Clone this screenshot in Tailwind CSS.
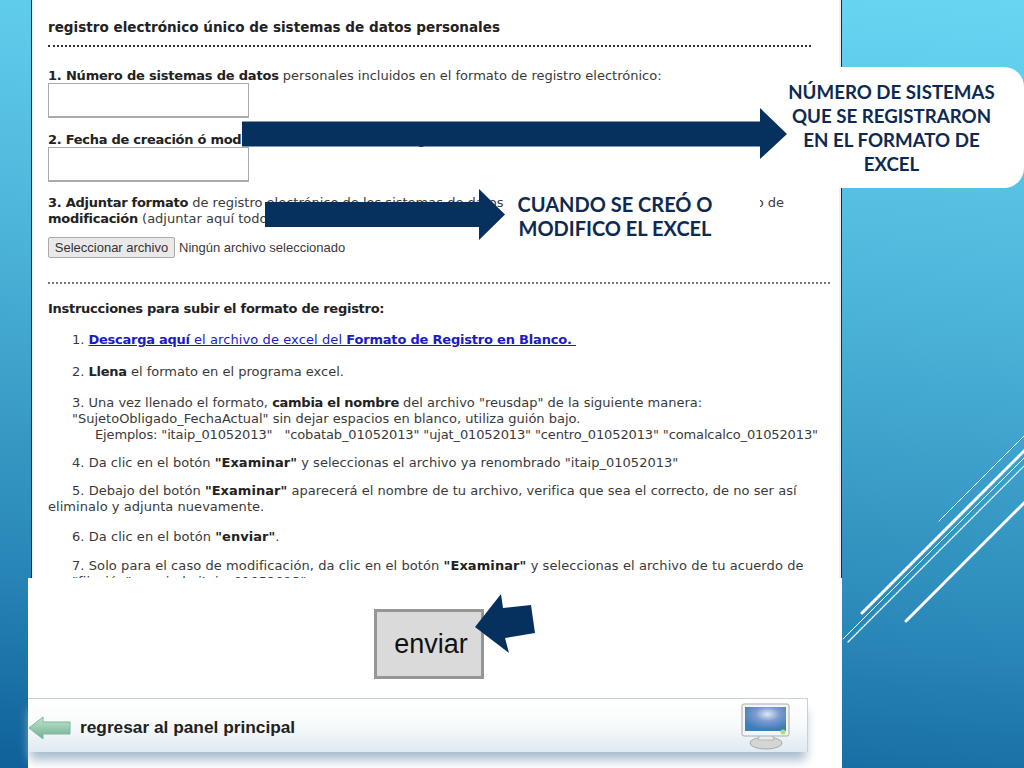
<!DOCTYPE html>
<html lang="es">
<head>
    <meta charset="UTF-8">
    <title>Registro electrónico</title>
    <script src="https://cdn.jsdelivr.net/npm/@tailwindcss/browser@4"></script>
</head>
<body class="bg-white">
<div class="relative w-[1024px] h-[768px] overflow-hidden bg-[linear-gradient(185deg,#68d6f3_0%,#4cb3d8_38%,#2a88b8_75%,#0e6199_100%)]">

    <!-- lineas decorativas -->
    <svg class="absolute inset-0" width="1024" height="768" fill="none" stroke="#fff" stroke-linecap="round">
        <path d="M939 521L1030 430" stroke-width="1"/>
        <path d="M862 613L1030 445" stroke-width="3"/>
        <path d="M843 639L1030 452" stroke-width="1"/>
        <path d="M848 642L1030 460" stroke-width="1.2"/>
        <path d="M906 621L1030 497" stroke-width="3"/>
    </svg>

    <!-- captura del formulario -->
    <div class="relative ml-[31px] w-[811px] h-[578px] overflow-hidden bg-white border-x border-x-[#0f2c52] shadow-[inset_2px_0_0_#f1f1f1,inset_-2px_0_0_#f1f1f1] pl-4 font-['DejaVu_Sans',sans-serif] text-[13px] leading-4 text-[#3a3a3a]">
        <h1 class="pt-[19px] text-[13.55px] font-bold text-[#222]">registro electrónico único de sistemas de datos personales</h1>
        <div class="mt-[10px] w-[763px] border-t-2 border-dotted border-[#333]"></div>

        <p class="mt-[21px]"><b class="text-[#222] tracking-[-0.2px]">1. Número de sistemas de datos</b> personales incluidos en el formato de registro electrónico:</p>
        <div class="mt-[-1px] w-[201px] h-[35px] border border-[#aaa] border-b-2 bg-white"></div>

        <p class="mt-[14px]"><b class="text-[#222] tracking-[-0.27px]">2. Fecha de creación ó modificación</b> del formato de registro electrónico en el sistema:</p>
        <div class="mt-[-1px] w-[201px] h-[35px] border border-[#aaa] border-b-2 bg-white"></div>

        <p class="mt-[13px] whitespace-nowrap"><b class="text-[#222] tracking-[-0.27px]">3. Adjuntar formato</b> de registro electrónico de los sistemas de datos personales, en el caso de su creación o de<br><b class="text-[#222] tracking-[-0.27px]">modificación</b> (adjuntar aquí todos los sistemas)</p>
        <div class="mt-[10px] flex items-center gap-1 font-['Liberation_Sans',sans-serif] text-[13px]">
            <button class="w-[127px] h-[21px] rounded-[2px] border border-[#aaa] bg-[#e9e9e9] text-[#333]">Seleccionar archivo</button>
            <span>Ningún archivo seleccionado</span>
        </div>
        <div class="mt-[24px] w-[782px] border-t-2 border-dotted border-[#777]"></div>

        <p class="mt-[17px] font-bold text-[#222] tracking-[-0.27px]">Instrucciones para subir el formato de registro:</p>
        <p class="mt-[15px] pl-6">1.&nbsp;<a class="text-[#1a1ac8] underline tracking-[0.1px]"><b class="tracking-[-0.27px]">Descarga aquí</b> el archivo de excel del <b class="tracking-[-0.2px]">Formato de Registro en Blanco.&nbsp;</b></a></p>
        <p class="mt-[16px] pl-6">2. <b class="text-[#222] tracking-[-0.27px]">Llena</b> el formato en el programa excel.</p>
        <p class="mt-[15px] pl-6">3. Una vez llenado el formato, <b class="text-[#222] tracking-[-0.27px]">cambia el nombre</b> del archivo "reusdap" de la siguiente manera:<br>"SujetoObligado_FechaActual" sin dejar espacios en blanco, utiliza guión bajo.<br><span class="pl-[23px] tracking-[-0.13px]">Ejemplos: "itaip_01052013" &nbsp; "cobatab_01052013" "ujat_01052013" "centro_01052013" "comalcalco_01052013"</span></p>
        <p class="mt-[12px] pl-6 tracking-[0.03px]">4. Da clic en el botón <b class="text-[#222]">"Examinar"</b> y seleccionas el archivo ya renombrado "itaip_01052013"</p>
        <p class="mt-[12px] w-[760px] indent-6 tracking-[0.04px]">5. Debajo del botón <b class="text-[#222]">"Examinar"</b> aparecerá el nombre de tu archivo, verifica que sea el correcto, de no ser así eliminalo y adjunta nuevamente.</p>
        <p class="mt-[14px] pl-6 tracking-[0.05px]">6. Da clic en el botón <b class="text-[#222]">"enviar"</b>.</p>
        <p class="mt-[13px] pl-6 tracking-[0.08px]">7. Solo para el caso de modificación, da clic en el botón <b class="text-[#222]">"Examinar"</b> y seleccionas el archivo de tu acuerdo de<br>"fijación" asociado itaip_01052013"</p>
    </div>

    <!-- parte inferior -->
    <div class="relative ml-[28px] w-[814px] h-[190px] bg-white">
        <div class="ml-[346px] mt-0 pt-[31px]">
            <div class="flex items-center justify-center w-[110px] h-[70px] border-[3px] border-[#969696] bg-[#dadada] pl-[4px] font-['Liberation_Sans',sans-serif] text-[27px] text-[#111]">enviar</div>
        </div>
        <div class="mt-[19px] flex items-center justify-between w-[780px] h-[54px] border-t border-r border-[#c2d4d8] bg-[linear-gradient(#fff_0%,#f7fafc_50%,#dfeaf1_100%)] shadow-[0_10px_10px_-2px_#a9bccd]">
            <div class="flex items-center gap-[9px] pt-[4px]">
                <svg width="43" height="24" viewBox="0 0 43 24">
                    <defs>
                        <linearGradient id="flecha" x1="0" y1="0" x2="0" y2="1">
                            <stop offset="0" stop-color="#c4e4d2"/>
                            <stop offset="1" stop-color="#6fb08f"/>
                        </linearGradient>
                    </defs>
                    <path d="M1 12L15 1V6H42V18H15V23Z" fill="url(#flecha)" stroke="#7fb79a"/>
                </svg>
                <span class="font-['Liberation_Sans',sans-serif] text-[17.3px] font-bold text-[#222]">regresar al panel principal</span>
            </div>
            <svg class="mr-[16px]" width="50" height="48" viewBox="0 0 50 48">
                <defs>
                    <radialGradient id="pantalla" cx="0.55" cy="0.3" r="0.65">
                        <stop offset="0" stop-color="#dbeaf6"/>
                        <stop offset="0.45" stop-color="#7f9ad0"/>
                        <stop offset="1" stop-color="#3a7fb8"/>
                    </radialGradient>
                </defs>
                <ellipse cx="25" cy="41" rx="16" ry="6" fill="#d4d6d6" stroke="#a8aaaa"/>
                <path d="M19 32h12l2 6H17z" fill="#eceeee" stroke="#b5b7b7"/>
                <rect x="1" y="2" width="47" height="32" rx="2" fill="#f4f5f5" stroke="#a9abab"/>
                <rect x="4" y="5" width="41" height="24" fill="url(#pantalla)"/>
                <circle cx="42" cy="30" r="2.5" fill="#a5e27a"/>
            </svg>
        </div>
    </div>

    <!-- textos de las llamadas -->
    <div class="absolute left-[767px] top-[67px] w-[257px] h-[121px] rounded-r-[20px] bg-white pr-[8px] pt-[13px] text-center font-['Lato',sans-serif] text-[18.7px] leading-6 font-bold text-[#0e2a52]">NÚMERO DE SISTEMAS<br>QUE SE REGISTRARON<br>EN EL FORMATO DE<br>EXCEL</div>
    <div class="absolute left-[505px] top-[190px] w-[255px] h-[50px] bg-white pr-[35px] pt-[2px] text-center font-['Lato',sans-serif] text-[20px] leading-6 font-bold text-[#0e2a52]">CUANDO SE CREÓ O<br>MODIFICO EL EXCEL</div>

    <!-- flechas -->
    <svg class="absolute inset-0" width="1024" height="768" fill="#06315f">
        <path d="M242 121.5H760V108L787 134L760 159V146.5H242Z"/>
        <path d="M265 202H479V189L505 214.5L479 240V227H265Z"/>
        <path d="M475 627L501 594L503 608L531 605L535 633L505 638L509 653Z"/>
    </svg>
</div>
</body>
</html>
